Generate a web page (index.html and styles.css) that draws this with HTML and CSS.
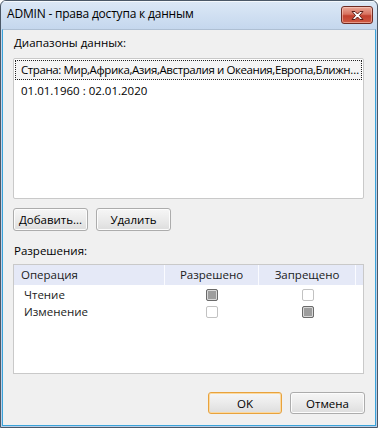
FILE: index.html
```html
<!DOCTYPE html>
<html>
<head>
<meta charset="utf-8">
<link rel="stylesheet" href="styles.css">
</head>
<body>
<div class="window">
  <div class="titlebar">
    <span class="title">ADMIN - права доступа к данным</span>
    <div class="close">
      <svg width="15" height="11" viewBox="0 0 15 11">
        <path d="M2 1.5 L5 1.5 L7.5 4 L10 1.5 L13 1.5 L9.5 5.5 L13 9.5 L10 9.5 L7.5 7 L5 9.5 L2 9.5 L5.5 5.5 Z" fill="#fff" stroke="#5a1c14" stroke-width="1" stroke-linejoin="round"/>
      </svg>
    </div>
  </div>
  <div class="client">
    <div class="label">Диапазоны данных:</div>
    <div class="listbox">
      <div class="item focus">Страна: Мир,Африка,Азия,Австралия и Океания,Европа,Ближн…</div>
      <div class="item">01.01.1960 : 02.01.2020</div>
    </div>
    <div class="btnrow">
      <button class="btn">Добавить...</button>
      <button class="btn">Удалить</button>
    </div>
    <div class="label perm">Разрешения:</div>
    <div class="table">
      <div class="thead">
        <div class="c1">Операция</div>
        <div class="c2">Разрешено</div>
        <div class="c3">Запрещено</div>
        <div class="c4"></div>
      </div>
      <div class="trow">
        <div class="c1">Чтение</div>
        <div class="c2"><span class="cb on"></span></div>
        <div class="c3"><span class="cb"></span></div>
      </div>
      <div class="trow">
        <div class="c1">Изменение</div>
        <div class="c2"><span class="cb"></span></div>
        <div class="c3"><span class="cb on"></span></div>
      </div>
    </div>
    <div class="footer">
      <button class="btn ok">OK</button>
      <button class="btn">Отмена</button>
    </div>
  </div>
</div>
</body>
</html>
```
FILE: styles.css
```css
* { box-sizing: border-box; }
html, body { margin: 0; padding: 0; background: #fff; }
body {
  font-family: "Open Sans", "Noto Sans", sans-serif;
  font-size: 11.5px;
  color: #000;
}
.window {
  width: 378px;
  height: 428px;
  border: 1px solid #4b5867;
  border-radius: 6px 6px 0 0;
  background: linear-gradient(#dce8f6, #c3d6ed 30px, #b9cfe9);
  display: flex;
  flex-direction: column;
  overflow: hidden;
}
.titlebar {
  height: 28px;
  display: flex;
  align-items: flex-start;
  justify-content: space-between;
  padding: 0 4px 0 6px;
  border-top: 1px solid #f4f8fc;
}
.title {
  margin-top: 3px;
  font-size: 12px;
  letter-spacing: -0.2px;
  color: #000;
}
.close {
  margin-top: 4px;
  width: 32px;
  height: 18px;
  border: 1px solid #6e2a22;
  border-radius: 3px;
  background: linear-gradient(#eaa898, #d7725f 45%, #c1402e 55%, #cf5a43);
  box-shadow: inset 0 0 0 1px rgba(255,220,210,0.5);
  display: flex;
  align-items: center;
  justify-content: center;
}
.client {
  flex: 1;
  margin: 0 1px 1px 1px;
  background: #f0f0f0;
  border: 1px solid #3aa3d9;
  border-top: 1px solid #aebfd3;
  padding: 5px 10px 11px 10px;
  display: flex;
  flex-direction: column;
}
.label {
  height: 16px;
  line-height: 16px;
  padding-left: 1px;
}
.listbox {
  margin-top: 7px;
  height: 141px;
  background: #fff;
  border: 1px solid #c9c9c9;
  border-radius: 2px;
  padding: 1px 1px;
  margin-right: 1px;
}
.item {
  height: 20px;
  line-height: 18px;
  padding: 0 5px;
  white-space: nowrap;
  border: 1px solid transparent;
}
.item + .item { margin-top: 1px; }
.item.focus {
  border: 1px dotted #222;
  background: #f4f4f4;
  letter-spacing: -0.4px;
}
.btnrow {
  margin-top: 9px;
  display: flex;
  gap: 8px;
}
.btn {
  font-family: inherit;
  font-size: 11.5px;
  color: #000;
  width: 75px;
  height: 23px;
  padding: 0;
  border: 1px solid #acacac;
  border-radius: 3px;
  background: linear-gradient(#f6f6f6, #ebebeb 50%, #dddddd);
  box-shadow: inset 0 0 0 1px #fcfcfc;
}
.perm { margin-top: 12px; }
.table {
  margin-top: 5px;
  height: 110px;
  background: #fff;
  border: 1px solid #c9c9c9;
  margin-right: 1px;
}
.thead {
  height: 20px;
  background: #e5e9f7;
  display: flex;
  line-height: 19px;
  color: #1b1b1b;
}
.thead > div { border-right: 1px solid #fafbff; }
.c1 { width: 151px; padding-left: 7px; }
.c2 { width: 94px; text-align: center; }
.c3 { width: 97px; text-align: center; }
.c4 { flex: 1; border-right: none !important; }
.trow {
  height: 17px;
  display: flex;
  align-items: center;
  color: #1b1b1b;
}
.thead + .trow { margin-top: 1px; }
.trow .c1 { padding-left: 10px; }
.trow .c2, .trow .c3 { display: flex; justify-content: center; }
.cb {
  width: 12px;
  height: 12px;
  border: 1px solid #c2c2c2;
  border-radius: 2px;
  background: #fff;
  display: block;
}
.cb.on {
  border: 1px solid #6a6a6a;
  background: #9d9d9d;
  box-shadow: inset 0 0 0 1px #d8d8d8;
}
.footer {
  margin-top: auto;
  display: flex;
  justify-content: flex-end;
  gap: 8px;
}
.footer .btn { height: 22px; }
.footer .btn.ok {
  width: 74px;
  border-color: #e8a23c;
  box-shadow: inset 0 0 0 1px #fbd9a0;
}
```
